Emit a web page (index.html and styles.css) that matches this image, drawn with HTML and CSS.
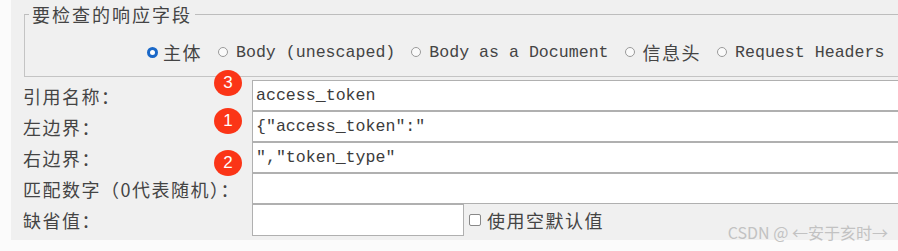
FILE: index.html
```html
<!DOCTYPE html>
<html lang="zh-CN">
<head>
  <meta charset="UTF-8">
  <title>正则表达式提取器</title>
  <link rel="stylesheet" href="styles.css">
</head>
<body>

  <div class="panel">

    <!-- 要检查的响应字段 -->
    <fieldset class="fields">
      <legend>要检查的响应字段</legend>
      <div class="radios">
        <span class="opt"><span class="radio on"></span><span class="cjk">主体</span></span>
        <span class="opt"><span class="radio"></span><span class="mono">Body (unescaped)</span></span>
        <span class="opt"><span class="radio"></span><span class="mono">Body as a Document</span></span>
        <span class="opt"><span class="radio"></span><span class="cjk">信息头</span></span>
        <span class="opt"><span class="radio"></span><span class="mono">Request Headers</span></span>
      </div>
    </fieldset>

    <!-- 表单 -->
    <div class="form">
      <div class="label">引用名称：</div>
      <div class="input">access_token</div>

      <div class="label">左边界：</div>
      <div class="input">{"access_token":"</div>

      <div class="label">右边界：</div>
      <div class="input">","token_type"</div>

      <div class="label">匹配数字（0代表随机）：</div>
      <div class="input"></div>

      <div class="label">缺省值：</div>
      <div class="last">
        <div class="input short"></div>
        <span class="check"></span>
        <span class="cjk">使用空默认值</span>
      </div>
    </div>

    <!-- 标注 -->
    <span class="badge b3">3</span>
    <span class="badge b1">1</span>
    <span class="badge b2">2</span>
  </div>

  <span class="mark">CSDN @ ←安于亥时→</span>

</body>
</html>
```

FILE: styles.css
```css
body {
  position: relative;
  margin: 0;
  padding: 0;
  height: 251px;
  background-color: #fbfbfb;
  font-family: "Noto Sans CJK SC", sans-serif;
  color: #444;
  overflow: hidden;
}

/* серый фон панели */
.panel {
  position: relative;
  margin-left: 11px;
  height: 240px;
  background-color: #f0f0f0;
  overflow: hidden;
}

.cjk {
  font-family: "Noto Sans CJK SC", sans-serif;
  font-size: 18px;
  letter-spacing: 1.5px;
}

.mono {
  font-family: "Liberation Mono", monospace;
  font-size: 16.6px;
}

/* рамка с радиокнопками */
.fields {
  margin: 2px -20px 0 13px;
  padding: 0;
  height: 75px;
  box-sizing: border-box;
  border: 1px solid #c4c4c4;
  border-top-color: #bdbdbd;
}

.fields legend {
  margin-left: 4px;
  padding: 0 3px;
  font-size: 18px;
  letter-spacing: 2px;
  line-height: 24px;
  color: #444;
}

.radios {
  display: flex;
  align-items: center;
  height: 26px;
  margin-top: 13px;
  padding-left: 122px;
}

.opt {
  display: flex;
  align-items: center;
  margin-right: 16px;
  white-space: nowrap;
}

.radio {
  width: 8px;
  height: 8px;
  border: 1px solid #9a9a9a;
  border-radius: 50%;
  background-color: #fafafa;
  margin-right: 8px;
}

.radio.on {
  width: 5px;
  height: 5px;
  border: 3px solid #1a68c8;
  background-color: #fff;
  margin-right: 5px;
}

/* строки формы */
.form {
  display: grid;
  grid-template-columns: 241px 1fr;
  grid-auto-rows: 31px;
  margin-top: 3px;
}

.label {
  display: flex;
  align-items: center;
  padding-left: 12px;
  font-size: 18px;
  letter-spacing: 1.5px;
  white-space: nowrap;
}

.input {
  display: flex;
  align-items: center;
  box-sizing: border-box;
  padding-left: 3px;
  background-color: #fff;
  border: 1px solid #b0b0b0;
  border-right: none;
  font-family: "Liberation Mono", monospace;
  font-size: 16.6px;
  color: #3c3c3c;
}

.last {
  display: flex;
  align-items: center;
  height: 32px;
}

.input.short {
  width: 212px;
  height: 32px;
  border-right: 1px solid #b0b0b0;
}

.check {
  width: 10px;
  height: 10px;
  border: 1px solid #888;
  border-radius: 2px;
  background-color: #fff;
  margin: 0 6px 0 5px;
}

/* красные метки поверх */
.badge {
  position: absolute;
  left: 203px;
  width: 28px;
  height: 26px;
  border-radius: 50%;
  background-color: #fb3517;
  color: #fff;
  font-family: "Liberation Sans", sans-serif;
  font-size: 17px;
  line-height: 26px;
  text-align: center;
}

.b3 { top: 70px; }
.b1 { top: 108px; }
.b2 { top: 150px; }

.mark {
  position: absolute;
  right: 10px;
  top: 221px;
  font-size: 16px;
  line-height: 22px;
  color: #c2c2c2;
  white-space: nowrap;
}
```
